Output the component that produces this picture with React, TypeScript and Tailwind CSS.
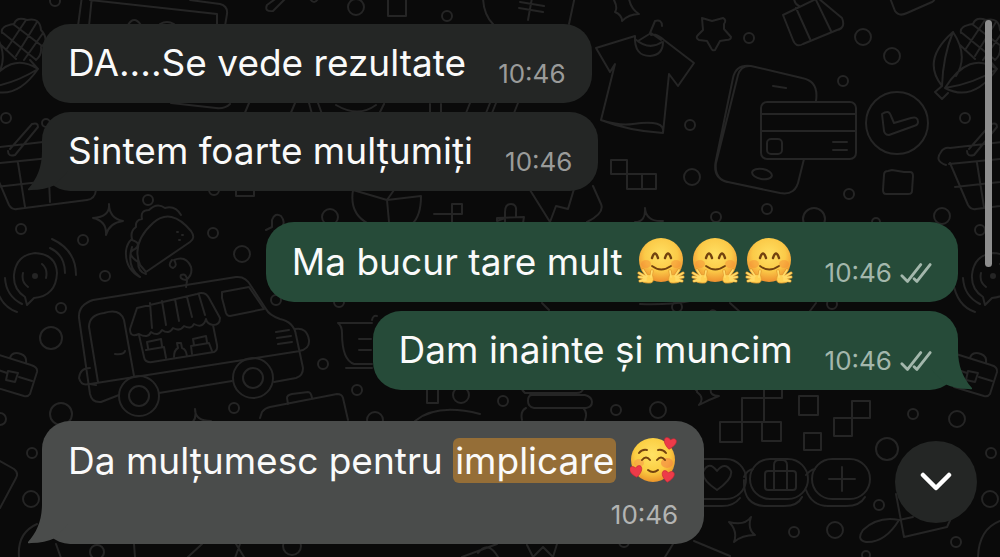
import type { ReactNode } from "react";

const dots = [
  [6, 118, 5], [46, 123, 4], [55, 1, 5], [21, 229, 5], [83, 240, 5], [105, 276, 5], [61, 308, 5],
  [148, 200, 5], [213, 233, 5], [242, 254, 8], [51, 338, 11], [61, 414, 11], [0, 419, 6],
  [32, 453, 5], [31, 499, 8], [234, 408, 5], [323, 364, 5], [357, 390, 5], [330, 217, 8],
  [276, 300, 5], [356, 7, 8], [447, 16, 5], [214, 190, 5], [339, 302, 5], [375, 420, 8],
  [461, 395, 8], [503, 401, 5], [616, 410, 5], [658, 410, 8], [677, 307, 5], [832, 304, 5],
  [749, 38, 5], [863, 37, 8], [892, 56, 8], [843, 81, 5], [690, 125, 5], [692, 177, 8],
  [965, 118, 5], [849, 194, 5], [767, 209, 5], [716, 217, 5], [942, 216, 8], [814, 219, 11],
  [980, 230, 5], [913, 414, 5], [957, 419, 8], [991, 453, 5], [990, 499, 8], [887, 449, 11],
  [879, 505, 5], [794, 532, 5], [835, 530, 8], [956, 542, 5], [876, 222, 4], [292, 546, 9],
  [97, 552, 7], [624, 542, 5], [866, 555, 4],
];

function Wallpaper() {
  return (
    <svg
      viewBox="0 0 1000 557"
      preserveAspectRatio="xMinYMin slice"
      className="absolute inset-0 h-full w-full fill-none stroke-[#252525] stroke-2"
      strokeLinecap="round"
      strokeLinejoin="round"
      aria-hidden="true"
    >
      {dots.map(([cx, cy, r]) => (
        <circle key={`${cx}-${cy}`} cx={cx} cy={cy} r={r} />
      ))}

      {/* blocks */}
      <path d="M388-4h18v20h-18zM611 160h16v14h-16zM627 174h15v15h-15zM642 174h14v15h-14zM452 204h10v10h-10zM434 214h18v12M236 190v6h18v-6" />
      <path d="M742 398h22v24h-22zM720 422h22v20h-22zM764 385h18v13h-18zM762 422h19v19h-19zM799 396h19v19h-19zM852 401h18v17h-18zM834 418h18v18h-18zM804 433h17v17h-17zM427 388h11v15h-11z" />

      {/* laptop, coins and gifts at the top edge */}
      <path d="M82-4 78 26M92-4 89 26M90 0l127 14v12M190 0l30 4q8 2 7 10l-2 12M128 25q6-10 13 0M160 24q7-4 14 0M278-3 267 5q-3 7 6 6L286-2M171 103l45 5q9 1 14-4M249 103l-5 12M295 103l-5 12M309 103l3 11M318 103l4 11M336 105q22 13 40 0M384 104l-4 8M430 104v8M441 104v8M470 103l-4 10M490 103l-4 10M496 103l-4 10M518 103l-4 10M483-4q0 18 10 28M575-4l-6 28M520 2l24 4M519 8l24 4M532-2l-4 22M309-3q5 10 10 0" />
      <path d="M783 15 818-2l24 20q4 10-5 12l-34 14q-7 4-10-4zM796 8l14 31M816 0l15 31M794-3q0 7 5 9M890-2l5 13q4 6 12 2l25-11q4-2 2-5" />

      {/* stars and sparkles */}
      <path d="M614 0q4 8 1 12 7 3 7 9 7-7 17-7-8-5-10-15" />
      <path d="m702 18 10 3 11-3q4 2 1 6l0 5 7 8q0 3-5 3l-6 1-5 9q-3 1-4-2l-4-7-8-1q-4-2-1-5l5-5z" />
      <path d="M109 204q1 13-16 14 14 3 13 17 3-12 17-14-14-3-14-17zM645 208q1 14 18 13M645 208q1 14-10 14M195 409q3 14-10 17M195 409q0 12 16 12M697 392q8 6 2 13 9-5 20-9-10 0-8-8M751 517q-6 9-22 5 9 9 5 20 8-7 21-7-8-6-4-18zM697 391l-8-8" />

      {/* corn */}
      {[0, 959].map((x) => (
        <path
          key={x}
          transform={`translate(${x} 0)`}
          d="M-17 86Q-38 60-6 32 10 56-3 76M-17 86Q-16 56-6 32M-17 86l-7 6 7 7 6-6M-14 88Q10 50 38 69 14 103-14 88zM-14 88Q14 84 38 69M38 69l-8-9M2 33q-2-7 12-9 3-8 13-4 13-3 14 10 9 10 0 17 1 8-5 13M3 33l32 26M13 24l29 22M1 45l15 14M37 22 16 56M43 33 24 60M26 20 6 50"
        />
      ))}

      {/* shirt */}
      <path d="M635 36 596 48l14 24 5-8-14 56q28 11 62 13l6-59 9 12 16-23-30-23q-8-7-13-5M635 36q-1 20 15 20 13-1 13-14M635 39q14 12 27 3M638 41l13-8 10 7M650 33l5-12q7-2 7 5M601 120q18 6 32 4 33-5 30 9" />

      {/* phone with card */}
      <path d="M816 101q3-20-14-23l-51-12q-10-1-13 9l-22 88q-2 16 12 19l52 11q16 3 19-14l5-20M751 66q-15-2-18 12l-17 82q-4 18 11 22M773 86l13 2" />
      <rect x="761" y="102" width="95" height="57" rx="6" />
      <path d="M761 114h95M761 131h95M833 142h14M833 150h14" />
      <rect x="767" y="139" width="15" height="15" rx="4" />
      <ellipse cx="762" cy="174" rx="10" ry="5" transform="rotate(10 762 174)" />
      <circle cx="897" cy="123" r="31" />
      <path d="M882 114q7-5 9 2l3 7 17-5q7-2 7 4 0 3-4 4l-25 9q-4 0-5-4zM884 175q0-4 4-4l4-1 12 2h6q3 0 3 4l-1 15q0 3-4 3h-22q-3 0-3-4z" />

      {/* baskets */}
      {[0, 959].map((x) => (
        <path
          key={x}
          transform={`translate(${x - 12} 0)`}
          d="m3 163 18 42q3 5 8 4l70-9q8-1 9-10l6-36M-1 165q-12-4-5-13 3-5 9-4l52-6M2 164l70-7M8 187l80-9M30 163l7 44M60 158l2 44M22 149l22-25q6-2 6 3L27 155q-7 2-7-4"
        />
      ))}

      {/* taco */}
      <path d="m146 272 44-30q6-4 1-11-20-24-38-8-22 20-13 42zM140 277q-15-8-14-26 1-8 6-12-2-8 4-12-1-7 6-8-2-9 7-9 8-8 16-2 10-3 16 7M132 240q10 3 3 9-10 4 3 13 0 10 8 12M132 247q-6 20 8 30" />
      <path d="M177 232h1M182 235h1M179 240h1M172 260q-5 6 1 8 5-2 1-8 12-5 17 7 2 8-5 13-7-1-5-5 6-2 6 6l-1 6" />

      {/* chat signal */}
      {[0, 958].map((x) => (
        <g key={x} transform={`translate(${x} 0)`}>
          <path d="M25 297q-12-8-11-22 2-20 21-22 21 1 22 20-1 23-23 25l-7 7zM28 287q-7-5-5-14M42 264q6 5 4 14M50 248q15 7 15 25M52 239q24 11 24 36M5 278q1 18 17 26M-5 282q4 24 22 30" />
          <circle cx="35" cy="276" r="2" className="fill-[#252525]" />
        </g>
      ))}

      {/* food truck */}
      <path d="m119 395-18 7q-9 1-11-8L79 318q-1-13 14-18l143-23q10-1 15 9l15 23q3 6 14 10 14 3 16 16l7 33q0 8-7 10l-22 4M159 393l73-12M90 384l210-33M90 384l6 1M98 382l-9-55q0-12 15-14 16-5 20 7l10 56M115 354q9 1 10-3M90 368q-10 0-11 10 2 8 10 6M295 329q12-2 14 11 1 9-10 11" />
      <path d="m137 308 60-14q8-3 12 4l11 20q0 7-7 7-6-1-7-6-3 10-12 5-3 6-10 2-4 6-11 2-4 7-11 2-4 7-11 2-3 7-12 2-9 4-9-5zM150 303l2 25M162 301l4 24M175 299l4 22M187 297l5 20M199 295l6 20M139 335l5 22q1 6 8 5l62-10q4-2 3-7l-4-20" />
      <path d="m146 350 18-3 2 11M148 348l-1-6 14-3 1 7M174 357q0-7 4-9l-1-5h4l1 5q4 1 5 8M192 354l-1-8 18-3 3 8M194 345l-1-6 13-3 1 6M222 292l27-5 15 22-34 7q-3 0-4-3l-4-15zM276 332l13-2M277 338l14-2M278 344l14-2" />
      <circle cx="139" cy="396" r="20" />
      <circle cx="139" cy="396" r="10" />
      <circle cx="253" cy="378" r="20" />
      <circle cx="253" cy="378" r="10" />

      {/* briefcases, cup, paddle */}
      {[0, 960].map((x) => (
        <path
          key={x}
          transform={`translate(${x} 0)`}
          d="m-4 354 35 11q7 2 6 7l-7 22q-2 3-6 2l-30-9M10 358q2-7 11-4 6 2 5 9M-2 370l9 3M19 377l13 4M8 371l10 2-3 9-9-2z"
        />
      ))}
      <path d="m260 418 2-6q3-4 8-5l67-13q5 0 6 4l5 22M288 404l-1-6q0-3 5-4l16-2q3 0 4 6M338 323h34M338 323q4 3 4 10 0 27 12 31h18M346 368h26M359 339h12M359 350h12M372 320q1-5 5-4" />
      <path d="M353 190q-4 24 16 34M353 190l34 10M387 200l7-10M387 200l34-4q0 20-9 28M387 200l2 22M505 224v-6l-8 3v-3l27-1-1 6M505 217v-5q0-8 6-8t5 8v5M530 190l20 32 6-16 12 3 6-20M593 186l8 18q4 9-14 18M266 230l6-3 0-7q3-8 9-4 4 5 2 9" />
      <path d="M415 421q22-18 65-7M528 377q-12 8-3 16h50q8 1 9-7M530 395h55q7 2 7 7t-6 6h-52q-6-1-6-7t4-6M526 408q-6 3-4 12M583 408q5 4 2 12" />
      <path d="M720 301h26M718 314q-6-8-10 1M640 304q30 1 50-3M542 303l7 7M816 303l-6 8M730 303l10 9" />

      {/* pills */}
      <rect x="646" y="459" width="100" height="40" rx="20" />
      <rect x="750" y="459" width="58" height="40" rx="20" />
      <rect x="812" y="459" width="58" height="40" rx="20" />
      <path d="M700 506h22q12 0 18-8M744 477q3-7 9-8M744 480q-1 26 22 26h18q14 0 18-9M806 475q4-5 9-6M806 490q6 16 22 16h18q14 0 19-9" />
      <path d="M717 490q-15-10-14-18 6-12 14-1 8-10 14 0 2 8-14 19zM842 467v24M829 479h26M774 471v-6q0-5 5-5h3q5 0 5 5v25M774 471v19" />
      <rect x="765" y="471" width="31" height="19" rx="3" />
      <path d="m896 494 8 43 43-10 6-13M899 520q-21-4-36 10-7 10 3 12 19 1 33-22l14-3M978 557q1-28 22-36M694 541l36 15" />

      {/* bottom edge */}
      <path d="m0 461 14 8q5 4 2 9L0 508M37 524q-20 9-18 33M56 544l5 14M134 544l1 13M202 544l-14 13M236 544l8 13M240 544l-5 14M462 557l35-13M478 553q10-13 20 4M527 545l6 12 10-10 10 10 4-13M673 544l-8 13" />
    </svg>
  );
}

function HugEmoji() {
  return (
    <svg viewBox="0 0 48 48" className="h-12 w-12" role="img" aria-label="hugging face">
      <defs>
        <radialGradient id="hug" cx="50%" cy="38%" r="62%">
          <stop offset="0" stopColor="#ffe063" />
          <stop offset="0.6" stopColor="#fbca48" />
          <stop offset="1" stopColor="#ee8f2e" />
        </radialGradient>
      </defs>
      <circle cx="24" cy="23" r="22" fill="url(#hug)" />
      <ellipse cx="9" cy="27" rx="5" ry="4" fill="#f48a35" opacity="0.45" />
      <ellipse cx="39" cy="27" rx="5" ry="4" fill="#f48a35" opacity="0.45" />
      <path d="M15 21q3-9 6 0M28 21q3-9 6 0" fill="none" stroke="#72420f" strokeWidth="2.4" strokeLinecap="round" />
      <path d="M15 29q9 7 19 0" fill="none" stroke="#72420f" strokeWidth="1.8" strokeLinecap="round" />
      {["", "translate(48 0) scale(-1 1)"].map((t) => (
        <g key={t} transform={t} strokeLinecap="round">
          <path d="M2 36l7 4M2 40l7 1M3 44l6-1M6 33l4 6M15 34l-1 6" stroke="#dd9229" strokeWidth="3" />
          <path d="M8 39q4-3 8 0 2 8-5 7-6 0-7-3z" fill="#ffd153" stroke="#e39a2d" strokeWidth="0.8" />
          <path d="M2 36l7 4M2 40l7 1M3 44l6-1M6 33l4 6M15 34l-1 6" stroke="#ffdb68" strokeWidth="1.8" />
        </g>
      ))}
    </svg>
  );
}

const heart = "M0 6C-10-1-5-8 0-3 5-8 10-1 0 6z";

function LoveEmoji() {
  return (
    <svg viewBox="0 0 48 48" className="h-12 w-12" role="img" aria-label="smiling face with hearts">
      <defs>
        <radialGradient id="love" cx="48%" cy="38%" r="60%">
          <stop offset="0" stopColor="#ffe265" />
          <stop offset="0.65" stopColor="#fbce42" />
          <stop offset="1" stopColor="#ed992c" />
        </radialGradient>
      </defs>
      <circle cx="23" cy="24" r="22" fill="url(#love)" />
      <ellipse cx="9" cy="27" rx="5" ry="4" fill="#f38445" opacity="0.4" />
      <ellipse cx="37" cy="27" rx="6" ry="5" fill="#f38445" opacity="0.6" />
      <path d="M9 17q3-4 8-3M28 14q5-1 8 3M12 24q4-5 8 0M27 24q4-5 8 0M18 34q5 4 10 0" fill="none" stroke="#72420f" strokeWidth="2" strokeLinecap="round" />
      <g fill="#ed3b49" stroke="#c72636" strokeWidth="0.6">
        <path d={heart} transform="translate(40 7) rotate(10) scale(1.05)" />
        <path d={heart} transform="translate(6 35) rotate(-8) scale(1.05)" />
        <path d={heart} transform="translate(38 40) rotate(8) scale(1.05)" />
      </g>
    </svg>
  );
}

function Ticks() {
  return (
    <svg viewBox="0 0 34 24" className="h-6 w-8 fill-none stroke-[#a3b7ac] stroke-3" strokeLinecap="round" strokeLinejoin="round" role="img" aria-label="delivered">
      <path d="m2 15 6 6L22 3M15 18l3 3L32 3" />
    </svg>
  );
}

function Tail({ className }: { className: string }) {
  return (
    <svg viewBox="0 0 40 40" className={`absolute bottom-0 h-10 w-10 ${className}`} aria-hidden="true">
      <path d="M14 0C14 16 9 28 0 38q-1 2 3 1 14 0 24-5L40 20V0z" />
    </svg>
  );
}

function Time({ children }: { children?: ReactNode }) {
  return (
    <div className="flex items-center gap-2 text-[26px] leading-8">
      <time>10:46</time>
      {children}
    </div>
  );
}

const bubble = "relative flex rounded-[28px] px-[26px] pt-[15px] pb-[13px]";
const received = `${bubble} self-start bg-[#242625] text-[#9a9b9a]`;
const sent = `${bubble} self-end bg-[#264b39] text-[#a3b7ac]`;
const body = "pb-1 text-[37px] leading-[47px] text-[#fafafa]";

export default function App() {
  return (
    <div className="relative min-h-screen overflow-hidden bg-[#0a0a0a] font-['Inter','Liberation_Sans',sans-serif]">
      <Wallpaper />

      <main className="relative flex flex-col gap-[9px] pt-6 pr-[42px] pb-3 pl-[42px]">
        <div className={`${received} items-end gap-8`}>
          <p className={body}>DA....Se vede rezultate</p>
          <Time />
        </div>
        <div className={`${received} items-end gap-8`}>
          <Tail className="-left-[14px] fill-[#242625]" />
          <p className={body}>Sintem foarte mulțumiți</p>
          <Time />
        </div>

        <div className={`${sent} mt-[22px] items-end gap-8`}>
          <div className={`${body} flex items-center gap-[14px]`}>
            <p>Ma bucur tare mult</p>
            <div className="flex gap-1.5">
              <HugEmoji />
              <HugEmoji />
              <HugEmoji />
            </div>
          </div>
          <Time>
            <Ticks />
          </Time>
        </div>
        <div className={`${sent} items-end gap-8`}>
          <Tail className="-right-[14px] -scale-x-100 fill-[#264b39]" />
          <p className={body}>Dam inainte și muncim</p>
          <Time>
            <Ticks />
          </Time>
        </div>

        <div className={`${bubble} mt-[22px] flex-col items-end gap-[11px] self-start bg-[#4a4c4b] text-[#b3b4b3]`}>
          <Tail className="-left-[14px] fill-[#4a4c4b]" />
          <div className={`${body} flex items-center gap-[14px]`}>
            <p>
              Da mulțumesc pentru <mark className="rounded-md bg-[#956e37] px-0.5 text-[#fafafa]">implicare</mark>
            </p>
            <LoveEmoji />
          </div>
          <Time />
        </div>
      </main>

      <div className="absolute top-5 right-2 h-[247px] w-[7px] rounded-full bg-[#8e8e8e]" />

      <button
        type="button"
        aria-label="Scroll to latest"
        className="absolute right-[23px] bottom-[34px] flex h-[82px] w-[82px] items-center justify-center rounded-full bg-[#242625]"
      >
        <svg viewBox="0 0 32 20" className="h-5 w-8 fill-none stroke-white stroke-[4.5]" strokeLinecap="round" strokeLinejoin="round" aria-hidden="true">
          <path d="m3 3 13 13L29 3" />
        </svg>
      </button>
    </div>
  );
}
